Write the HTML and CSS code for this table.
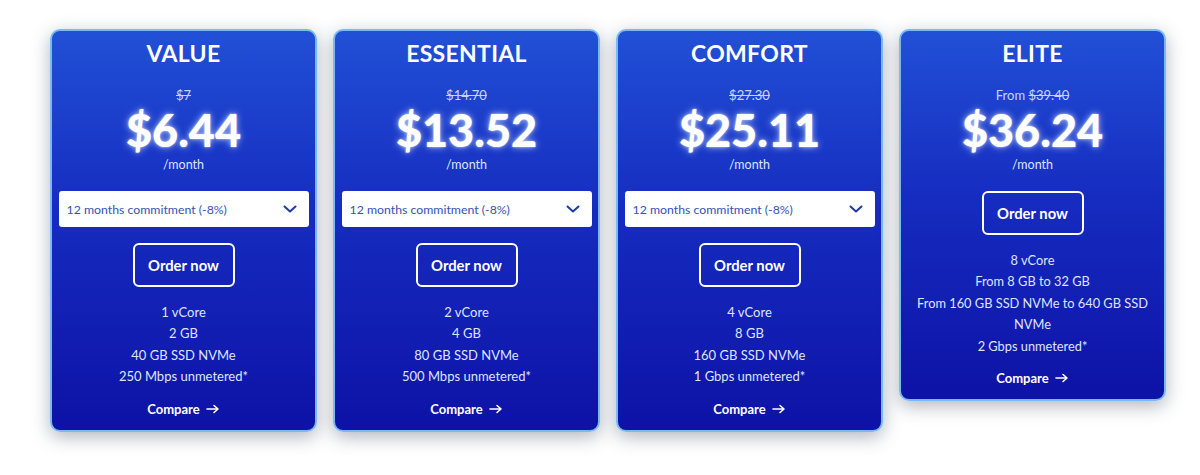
FILE: index.html
```html
<!DOCTYPE html>
<html lang="en">
<head>
<meta charset="utf-8">
<title>Plans</title>
<link rel="stylesheet" href="styles.css">
</head>
<body>
<div class="plans">
  <div class="card">
    <h2 class="title">VALUE</h2>
    <div class="old"><s>$7</s></div>
    <div class="price">$6.44</div>
    <div class="per">/month</div>
    <div class="select"><span>12 months commitment (-8%)</span><svg class="chev" width="14" height="8" viewBox="0 0 14 8"><path d="M1.5 1.5 L7 6.5 L12.5 1.5" fill="none" stroke="#1d3aa6" stroke-width="2" stroke-linecap="round" stroke-linejoin="round"/></svg></div>
    <a class="order">Order now</a>
    <ul class="feats"><li>1 vCore</li><li>2 GB</li><li>40 GB SSD NVMe</li><li>250 Mbps unmetered*</li></ul>
    <a class="compare">Compare <svg width="14" height="10" viewBox="0 0 14 10"><path d="M1 5 H12 M8 1.5 L12 5 L8 8.5" fill="none" stroke="#fff" stroke-width="1.6" stroke-linecap="round" stroke-linejoin="round"/></svg></a>
  </div>
  <div class="card">
    <h2 class="title">ESSENTIAL</h2>
    <div class="old"><s>$14.70</s></div>
    <div class="price">$13.52</div>
    <div class="per">/month</div>
    <div class="select"><span>12 months commitment (-8%)</span><svg class="chev" width="14" height="8" viewBox="0 0 14 8"><path d="M1.5 1.5 L7 6.5 L12.5 1.5" fill="none" stroke="#1d3aa6" stroke-width="2" stroke-linecap="round" stroke-linejoin="round"/></svg></div>
    <a class="order">Order now</a>
    <ul class="feats"><li>2 vCore</li><li>4 GB</li><li>80 GB SSD NVMe</li><li>500 Mbps unmetered*</li></ul>
    <a class="compare">Compare <svg width="14" height="10" viewBox="0 0 14 10"><path d="M1 5 H12 M8 1.5 L12 5 L8 8.5" fill="none" stroke="#fff" stroke-width="1.6" stroke-linecap="round" stroke-linejoin="round"/></svg></a>
  </div>
  <div class="card">
    <h2 class="title">COMFORT</h2>
    <div class="old"><s>$27.30</s></div>
    <div class="price">$25.11</div>
    <div class="per">/month</div>
    <div class="select"><span>12 months commitment (-8%)</span><svg class="chev" width="14" height="8" viewBox="0 0 14 8"><path d="M1.5 1.5 L7 6.5 L12.5 1.5" fill="none" stroke="#1d3aa6" stroke-width="2" stroke-linecap="round" stroke-linejoin="round"/></svg></div>
    <a class="order">Order now</a>
    <ul class="feats"><li>4 vCore</li><li>8 GB</li><li>160 GB SSD NVMe</li><li>1 Gbps unmetered*</li></ul>
    <a class="compare">Compare <svg width="14" height="10" viewBox="0 0 14 10"><path d="M1 5 H12 M8 1.5 L12 5 L8 8.5" fill="none" stroke="#fff" stroke-width="1.6" stroke-linecap="round" stroke-linejoin="round"/></svg></a>
  </div>
  <div class="card">
    <h2 class="title">ELITE</h2>
    <div class="old">From <s>$39.40</s></div>
    <div class="price">$36.24</div>
    <div class="per">/month</div>
    <a class="order">Order now</a>
    <ul class="feats"><li>8 vCore</li><li>From 8 GB to 32 GB</li><li>From 160 GB SSD NVMe to 640 GB SSD NVMe</li><li>2 Gbps unmetered*</li></ul>
    <a class="compare">Compare <svg width="14" height="10" viewBox="0 0 14 10"><path d="M1 5 H12 M8 1.5 L12 5 L8 8.5" fill="none" stroke="#fff" stroke-width="1.6" stroke-linecap="round" stroke-linejoin="round"/></svg></a>
  </div>
</div>
</body>
</html>
```
FILE: styles.css
```css
html, body {
  margin: 0;
  padding: 0;
  background: #ffffff;
}
body {
  font-family: "Lato", "Noto Sans", sans-serif;
  color: #fff;
  min-height: 475px;
}
.plans {
  display: flex;
  align-items: flex-start;
  gap: 16px;
  padding: 29px 0 40px 50px;
}
.card {
  box-sizing: border-box;
  width: 267px;
  border: 2px solid #78bbf2;
  border-radius: 10px;
  background: linear-gradient(180deg, #2150d6 0%, #162cc0 45%, #0e12a6 100%);
  box-shadow: 0 5px 18px rgba(50, 60, 90, 0.38);
  padding: 8px 7px 11px;
  display: flex;
  flex-direction: column;
  align-items: center;
  text-align: center;
}
.title {
  margin: 0;
  font-size: 23px;
  line-height: 28px;
  font-weight: 700;
  letter-spacing: 0.3px;
}
.old {
  margin-top: 19px;
  font-size: 13px;
  line-height: 18px;
  color: #c9d2f7;
}
.old s {
  text-decoration-thickness: 1px;
}
.price {
  margin-top: 1px;
  font-size: 45px;
  line-height: 50px;
  font-weight: 900;
  text-shadow: 0 0 7px rgba(215, 230, 255, 0.8), 0 0 2px rgba(255,255,255,0.7);
}
.per {
  margin-top: 2px;
  font-size: 12.5px;
  line-height: 16px;
  color: #dfe5ff;
}
.select {
  box-sizing: border-box;
  margin-top: 18px;
  width: 250px;
  height: 36px;
  background: #fff;
  border-radius: 3px;
  display: flex;
  align-items: center;
  justify-content: space-between;
  padding: 0 12px 0 8px;
  font-size: 12.3px;
  color: #3552b0;
}
.chev {
  display: block;
}
.order {
  box-sizing: border-box;
  margin-top: 16px;
  width: 102px;
  height: 44px;
  border: 2px solid #fff;
  border-radius: 6px;
  display: flex;
  align-items: center;
  justify-content: center;
  font-size: 14.8px;
  font-weight: 700;
}
.card:last-child .order {
  margin-top: 18px;
}
.feats {
  list-style: none;
  margin: 15px 0 0;
  padding: 0;
  font-size: 13px;
  line-height: 21.4px;
  color: #dfe5ff;
}
.card:last-child .feats {
  font-size: 12.8px;
}
.compare {
  margin-top: 11px;
  font-size: 13px;
  line-height: 20px;
  font-weight: 700;
  display: flex;
  align-items: center;
  gap: 6px;
}
.compare svg {
  display: block;
}
```
